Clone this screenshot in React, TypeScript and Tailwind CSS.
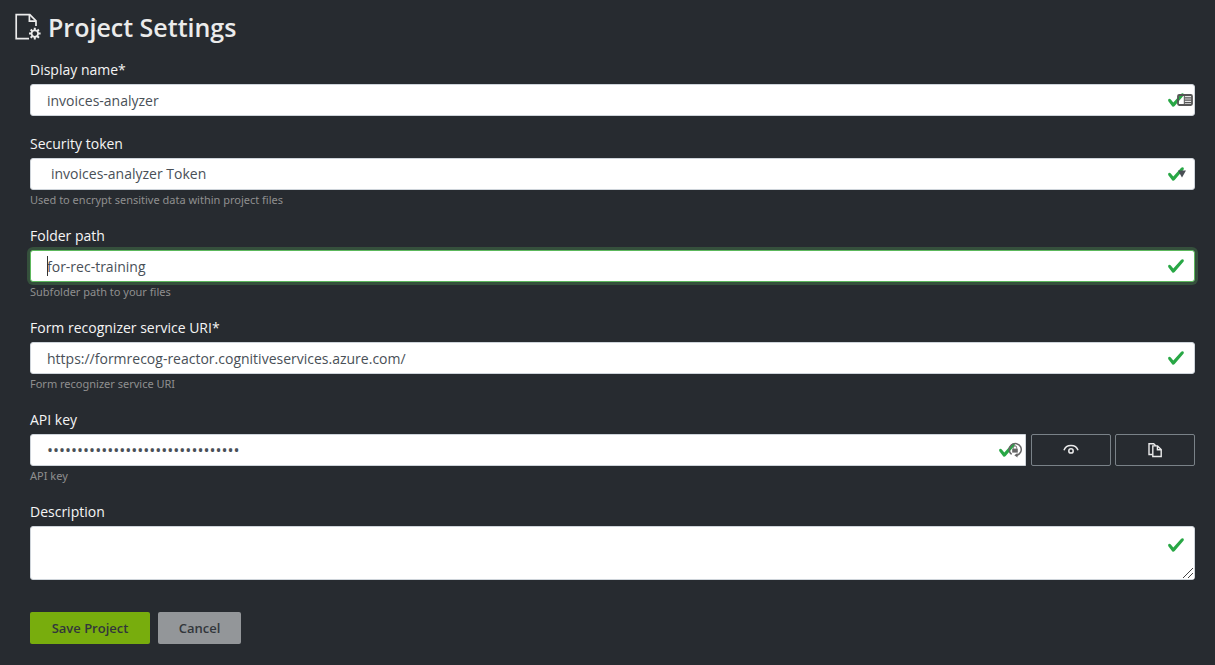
import type { ReactNode } from "react";

const inputClass =
  "block h-8 w-full appearance-none rounded-[3px] border border-[#ced4da] bg-white pl-4 pr-10 text-[14px] leading-5 text-[#495057] outline-none";

function ValidMark() {
  return (
    <svg className="block size-[18px]" viewBox="0 0 8 8" aria-hidden="true">
      <path
        fill="#28a745"
        d="M2.3 6.73L.6 4.53c-.4-1.04.46-1.4 1.1-.8l1.1 1.4 3.4-3.8c.6-.63 1.6-.27 1.2.7l-4 4.6c-.43.5-.8.4-1.1.1z"
      />
    </svg>
  );
}

function ContactCardIcon() {
  return (
    <svg className="block h-3 w-4" viewBox="0 0 16 12" aria-hidden="true">
      <rect x="7" y="1" width="8" height="10" fill="#e4e4e4" />
      <rect x="1" y="1" width="14" height="10" rx="1.2" fill="none" stroke="#555555" strokeWidth="1.8" />
      <path d="M7.5 3.8h7M7.5 6.2h7M7.5 8.6h7" stroke="#555555" strokeWidth="1.3" />
      <path d="M7.3 1.5v9" stroke="#555555" strokeWidth="1" />
    </svg>
  );
}

function PasswordManagerIcon() {
  return (
    <svg className="block size-4" viewBox="0 0 16 16" fill="none" aria-hidden="true">
      <path d="M4.6 12.3A6 6 0 1 1 9.5 13.4" stroke="#666666" strokeWidth="1.5" />
      <path d="M10.5 11v4.6L7.3 13.3z" fill="#666666" />
      <rect x="5.2" y="6.6" width="5.6" height="4" fill="#666666" />
      <path d="M6.4 6.6V5.4a1.6 1.6 0 0 1 3.2 0v1.2" stroke="#666666" />
    </svg>
  );
}

function ProjectIcon() {
  return (
    <svg className="block size-7 shrink-0" viewBox="0 0 28 28" fill="none" stroke="#ebebeb" aria-hidden="true">
      <path d="M14 25.6H1.2V1.6h13.6l6.2 6.2V13" strokeWidth="1.7" />
      <path d="M14.4 1.6v6.6H21" strokeWidth="1.7" />
      <circle cx="19.8" cy="20.6" r="3.3" strokeWidth="1.8" />
      <path
        strokeWidth="2"
        d="M19.8 14.8v2.4M19.8 24v2.4M14 20.6h2.400M23.200 20.600h2.400M15.700 16.500l1.700 1.700M22.200 23l1.700 1.700M23.900 16.500l-1.700 1.700M17.400 23l-1.700 1.700"
      />
    </svg>
  );
}

function EyeIcon() {
  return (
    <svg className="block size-4" viewBox="0 0 16 16" fill="none" stroke="#ebebeb" aria-hidden="true">
      <path d="M1 8.2C2 5 4.8 3.400 8 3.400S14 5 15 8.200" strokeWidth="1.5" />
      <circle cx="8" cy="8.900" r="2.200" strokeWidth="1.5" />
    </svg>
  );
}

function CopyIcon() {
  return (
    <svg className="block size-4" viewBox="0 0 16 16" fill="none" stroke="#ebebeb" strokeWidth="1.400" aria-hidden="true">
      <path d="M5.500 12.500H2V1.700h4.700l2 2" />
      <path d="M5.800 3.900h4.700l3.700 3.700v6.900H5.800z" />
      <path d="M10.400 4v3.800H14" />
    </svg>
  );
}

function ResizeGrip() {
  return (
    <svg className="block size-3.5 bg-white" viewBox="0 0 14 14" stroke="#444444" aria-hidden="true">
      <path d="M3 13 13 3M8 13l5-5" strokeWidth="1" />
    </svg>
  );
}

type FieldProps = { id: string; label: string; help?: string; children: ReactNode };

function Field({ id, label, help, children }: FieldProps) {
  return (
    <div>
      <label htmlFor={id} className="mb-[3px] block w-fit text-[14px] leading-[22px] text-[#f5f5f5]">
        {label}
      </label>
      {children}
      {help && (
        <p className="pt-0.5 font-['Noto_Sans','Open_Sans',sans-serif] text-[11px] leading-4 text-[#8f8f8f]">{help}</p>
      )}
    </div>
  );
}

export default function App() {
  return (
    <main className="min-h-screen bg-[#272b30] font-['Open_Sans','Noto_Sans',sans-serif]">
      <h1 className="flex items-center gap-[5px] px-[15px] pt-[11px] text-[25px] leading-8 font-semibold text-[#ebebeb]">
        <ProjectIcon />
        <span>Project Settings</span>
      </h1>

      <form className="flex flex-col gap-[17px] pt-4 pr-5 pb-5 pl-[30px]" onSubmit={(event) => event.preventDefault()}>
        <Field id="name" label="Display name*">
          <div className="relative">
            <input id="name" type="text" defaultValue="invoices-analyzer" className={inputClass} />
            <span className="pointer-events-none absolute top-[7px] right-2.5">
              <ValidMark />
            </span>
            <span className="pointer-events-none absolute top-[10px] right-0.5">
              <ContactCardIcon />
            </span>
          </div>
        </Field>

        <Field id="token" label="Security token" help="Used to encrypt sensitive data within project files">
          <div className="relative">
            <select
              id="token"
              className="block h-8 w-full appearance-none rounded-[3px] border border-[#ced4da] bg-white pr-10 pl-5 text-[14px] leading-5 text-[#495057] outline-none"
            >
              <option>invoices-analyzer Token</option>
            </select>
            <span className="pointer-events-none absolute top-[7px] right-2.5">
              <ValidMark />
            </span>
            <svg className="pointer-events-none absolute top-3 right-[9px] h-2 w-2" viewBox="0 0 8 8" aria-hidden="true">
              <path d="M0 0.500h8L4 7.500z" fill="#4a4f55" />
            </svg>
          </div>
        </Field>

        <Field id="folder" label="Folder path" help="Subfolder path to your files">
          <div className="relative">
            <input
              id="folder"
              type="text"
              defaultValue="for-rec-training"
              className="block h-8 w-full rounded-[3px] border border-[#5cb85c] bg-white pr-10 pl-4 text-[14px] leading-5 text-[#495057] ring-3 ring-[#35503c] outline-none"
            />
            <span className="pointer-events-none absolute top-1.5 left-[17px] h-5 w-px bg-[#333333]" />
            <span className="pointer-events-none absolute top-[7px] right-2.5">
              <ValidMark />
            </span>
          </div>
        </Field>

        <Field id="uri" label="Form recognizer service URI*" help="Form recognizer service URI">
          <div className="relative">
            <input
              id="uri"
              type="text"
              defaultValue="https://formrecog-reactor.cognitiveservices.azure.com/"
              className={inputClass}
            />
            <span className="pointer-events-none absolute top-[7px] right-2.5">
              <ValidMark />
            </span>
          </div>
        </Field>

        <Field id="key" label="API key" help="API key">
          <div className="flex gap-[5px]">
            <div className="relative flex-1">
              <input
                id="key"
                type="password"
                defaultValue="0123456789abcdef0123456789abcdef"
                className="block h-8 w-full rounded-l-[3px] border border-[#ced4da] bg-white pr-10 pl-4 text-[16px] leading-5 text-[#495057] outline-none"
              />
              <span className="pointer-events-none absolute top-[7px] right-2.5">
                <ValidMark />
              </span>
              <span className="pointer-events-none absolute top-2 right-[3px]">
                <PasswordManagerIcon />
              </span>
            </div>
            <div className="flex gap-1">
              <button
                type="button"
                aria-label="Show API key"
                className="flex h-8 w-20 items-center justify-center rounded-xs border border-[#7a8288]"
              >
                <EyeIcon />
              </button>
              <button
                type="button"
                aria-label="Copy API key"
                className="flex h-8 w-20 items-center justify-center rounded-xs border border-[#7a8288]"
              >
                <CopyIcon />
              </button>
            </div>
          </div>
        </Field>

        <Field id="description" label="Description">
          <div className="relative">
            <textarea
              id="description"
              className="block h-[54px] w-full resize rounded-[3px] border border-[#ced4da] bg-white px-4 py-1 text-[14px] leading-5 text-[#495057] outline-none"
            />
            <span className="pointer-events-none absolute top-[10px] right-2.5">
              <ValidMark />
            </span>
            <span className="pointer-events-none absolute right-px bottom-px">
              <ResizeGrip />
            </span>
          </div>
        </Field>

        <div className="flex gap-2 pt-[15px] text-[13px] leading-5 font-semibold text-[#32363b]">
          <button type="submit" className="h-8 w-[120px] rounded-xs bg-[#78ad0d]">
            Save Project
          </button>
          <button type="button" className="h-8 w-[83px] rounded-xs bg-[#939699]">
            Cancel
          </button>
        </div>
      </form>
    </main>
  );
}
